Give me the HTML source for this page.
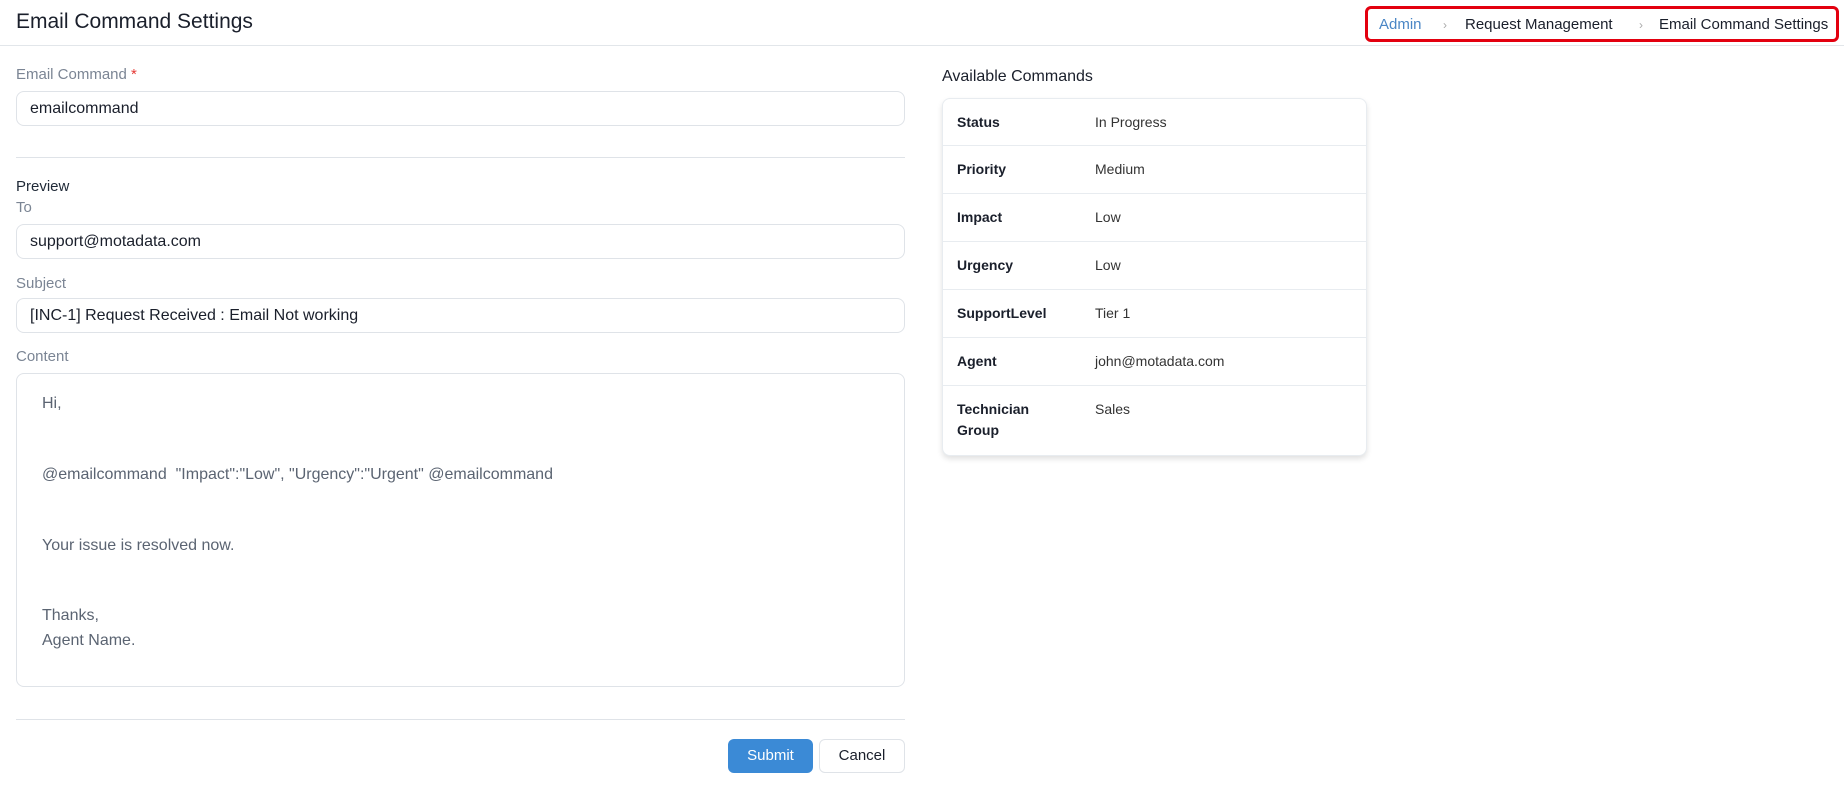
<!DOCTYPE html>
<html><head><meta charset="utf-8"><style>
*{box-sizing:border-box;margin:0;padding:0}
body{width:1844px;height:789px;background:#fff;font-family:"Liberation Sans",sans-serif;color:#1f2937;position:relative;overflow:hidden}
.a{position:absolute}
.hdr{left:0;top:0;width:1844px;height:46px;border-bottom:1px solid #e2e6ea}
.title{left:16px;top:10px;font-size:21px;color:#1a1f2b}
.bc{left:1365px;top:6px;width:474px;height:36px;border:3px solid #e3000f;border-radius:6px;font-size:15px}
.bc span{position:absolute;top:7px}
.lbl{font-size:15px;color:#7b8594;left:16px}
.inp{left:16px;width:889px;height:35px;border:1px solid #dfe3e8;border-radius:8px;font-size:16px;padding:8px 0 0 13px;color:#1a1f2b}
.hr{left:16px;width:889px;height:1px;background:#dfe3e8}
.ct{font-size:16px;color:#5b6472;left:42px}
.card{left:942px;top:98px;width:425px;height:358px;border:1px solid #e8ecf0;border-radius:8px;box-shadow:0 3px 6px rgba(0,0,0,.12);background:#fff}
.row{position:absolute;left:0;width:423px;border-bottom:1px solid #e8ecf0;font-size:14px}
.row b{position:absolute;left:14px;top:13px;color:#1a1f2b;line-height:21px}
.row i{position:absolute;left:152px;top:13px;font-style:normal;color:#333;line-height:21px}
</style></head><body>
<div class="a hdr"></div>
<div class="a title">Email Command Settings</div>
<div class="a bc"><span style="left:11px;color:#4a86c5">Admin</span><span style="left:75px;color:#aaa;font-size:12px;top:9px">›</span><span style="left:97px;color:#1a1f2b">Request Management</span><span style="left:271px;color:#aaa;font-size:12px;top:9px">›</span><span style="left:291px;color:#1a1f2b">Email Command Settings</span></div>

<div class="a lbl" style="top:66px">Email Command<span style="color:#e53935"> *</span></div>
<div class="a inp" style="top:91px">emailcommand</div>
<div class="a hr" style="top:157px"></div>
<div class="a lbl" style="top:178px;color:#1f2937">Preview</div>
<div class="a lbl" style="top:199px">To</div>
<div class="a inp" style="top:224px">support@motadata.com</div>
<div class="a lbl" style="top:275px">Subject</div>
<div class="a inp" style="top:298px">[INC-1] Request Received : Email Not working</div>
<div class="a lbl" style="top:348px">Content</div>
<div class="a" style="left:16px;top:373px;width:889px;height:314px;border:1px solid #dfe3e8;border-radius:8px"></div>
<div class="a ct" style="top:395px">Hi,</div>
<div class="a ct" style="top:466px">@emailcommand&nbsp; "Impact":"Low", "Urgency":"Urgent" @emailcommand</div>
<div class="a ct" style="top:537px">Your issue is resolved now.</div>
<div class="a ct" style="top:607px">Thanks,</div>
<div class="a ct" style="top:632px">Agent Name.</div>
<div class="a hr" style="top:719px"></div>
<div class="a" style="left:728px;top:739px;width:85px;height:34px;background:#3b8ad6;border-radius:6px;color:#fff;font-size:15px;text-align:center;line-height:34px">Submit</div>
<div class="a" style="left:819px;top:739px;width:86px;height:34px;border:1px solid #dfe3e8;border-radius:6px;color:#1a1f2b;font-size:15px;text-align:center;line-height:32px">Cancel</div>

<div class="a" style="left:942px;top:68px;font-size:16px;color:#1a1f2b">Available Commands</div>
<div class="a card">
<div class="row" style="top:0;height:47px"><b>Status</b><i>In Progress</i></div>
<div class="row" style="top:47px;height:48px"><b>Priority</b><i>Medium</i></div>
<div class="row" style="top:95px;height:48px"><b>Impact</b><i>Low</i></div>
<div class="row" style="top:143px;height:48px"><b>Urgency</b><i>Low</i></div>
<div class="row" style="top:191px;height:48px"><b>SupportLevel</b><i>Tier 1</i></div>
<div class="row" style="top:239px;height:48px"><b>Agent</b><i>john@motadata.com</i></div>
<div class="row" style="top:287px;height:70px;border:none"><b>Technician<br>Group</b><i>Sales</i></div>
</div>
</body></html>
